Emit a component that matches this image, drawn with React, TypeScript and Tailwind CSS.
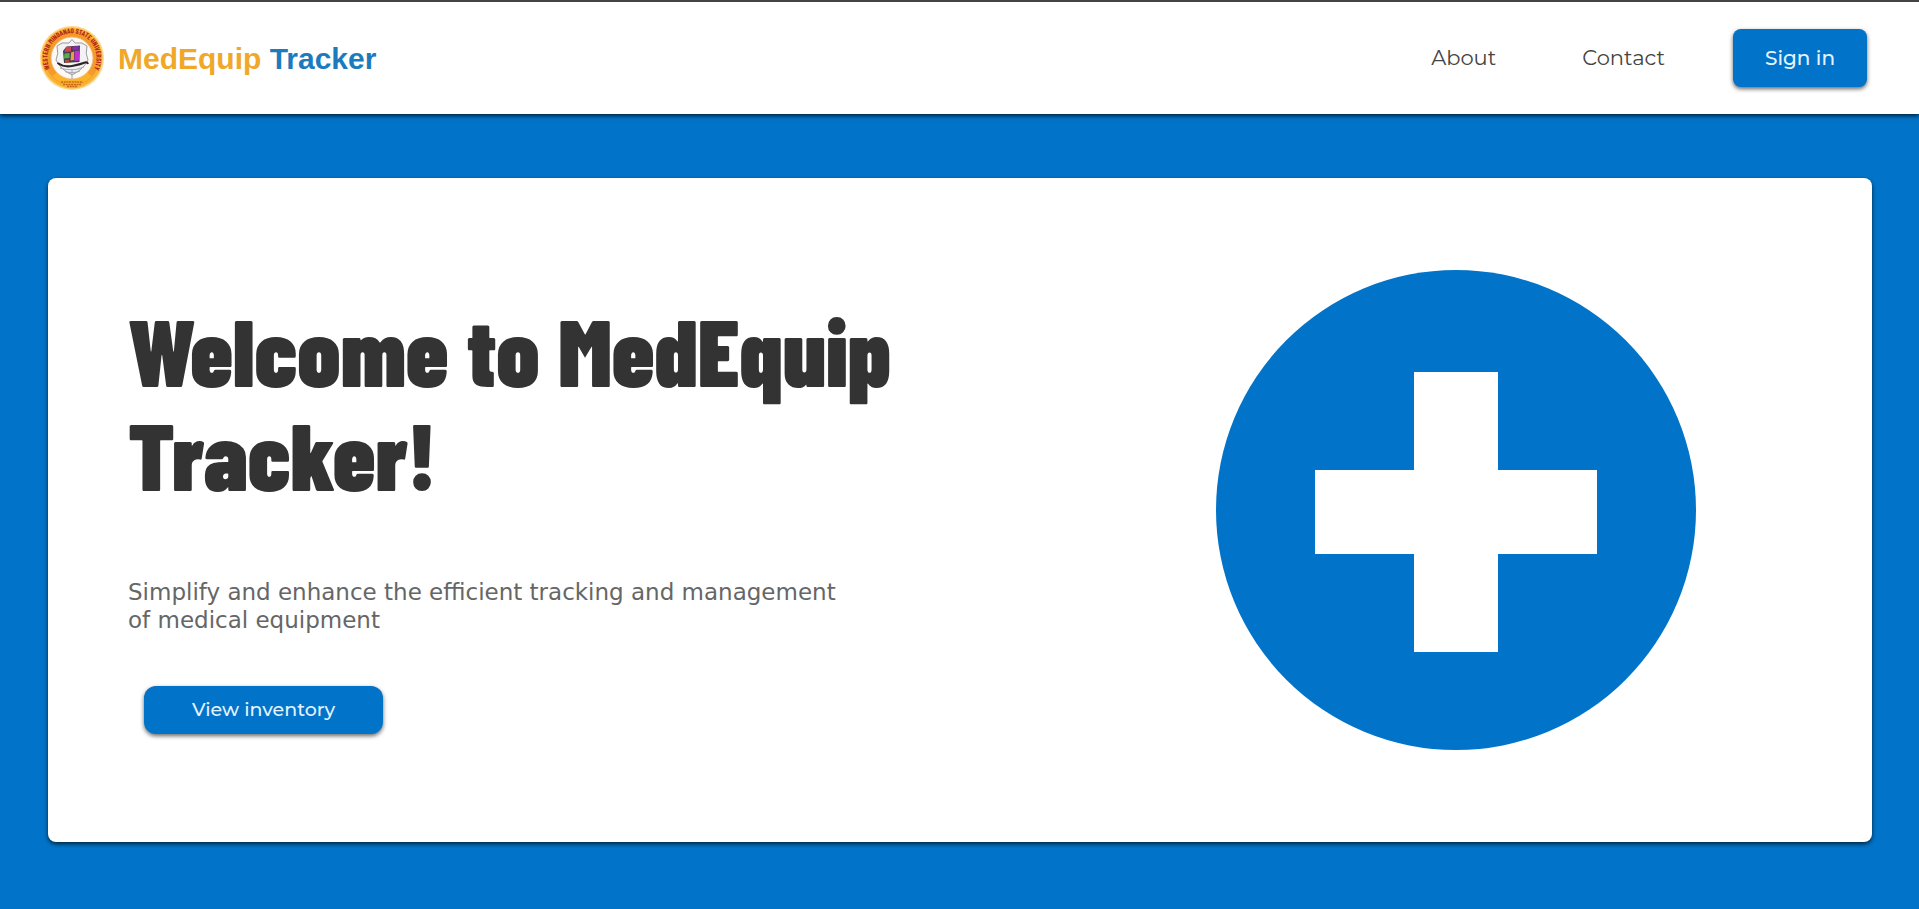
function Seal() {
  return (
    <svg viewBox="0 0 64 64" className="size-16 shrink-0" role="img" aria-label="University seal">
      <defs>
        <path id="seal-arc" d="M 15 49.5 A 24.5 24.5 0 1 1 49 49.5" />
      </defs>
      <circle cx="32" cy="32" r="32" fill="#fbd98c" />
      <circle cx="32" cy="32" r="30.5" fill="#f9b233" />
      <circle cx="32" cy="32" r="27.5" fill="#f59a2a" />
      <path d="M12 50 A 27 27 0 0 0 52 50 L46 46 A 20 20 0 0 1 18 46 Z" fill="#fbb429" />
      <circle cx="32" cy="32" r="21" fill="#fdfaf5" stroke="#f3b77a" strokeWidth="0.8" />
      <text fontFamily="Barlow Condensed, Roboto Condensed, sans-serif" fontSize="7" fontWeight="700" fill="#b3271a">
        <textPath href="#seal-arc" startOffset="50%" textAnchor="middle">
          WESTERN MINDANAO STATE UNIVERSITY
        </textPath>
      </text>
      <path d="M21 56 h22 M23 58.5 h18 M27 60.5 h10" stroke="#c96a1c" strokeWidth="1.4" strokeDasharray="2 0.7" />
      <path
        d="M32 13.5 L35 17 H42 L47 20 Q45 28 48 34 Q44 43 32 49 Q20 43 16 34 Q19 28 17 20 L22 17 H29 Z"
        fill="#f3f3f5"
        stroke="#8b9099"
        strokeWidth="0.9"
      />
      <path d="M23 25 L26.5 20.5 L40 19.5 L39.5 36 L24 37 Z" fill="#493d4c" />
      <path d="M26 21 L31 20.5 V25.5 L24.5 26 Z" fill="#cf4554" />
      <path d="M32.5 20.5 L38.5 20 V23.5 L32.5 24.5 Z" fill="#7d2fae" />
      <path d="M24.5 27.5 L29.5 27 V32 L24 32.5 Z" fill="#55b04d" />
      <path d="M31 26.5 L34 25.5 V34 L30.5 34.5 Z" fill="#e6a13c" />
      <path d="M34.5 25 L39 24.5 V34.5 L34.5 35 Z" fill="#c02fd0" />
      <path d="M25 34 L29 33.5 V36.5 L25 37 Z" fill="#b34b3c" />
      <path d="M17.5 37 Q24 41.5 32 40 T45 36.5 Q47 35.5 48 38" fill="none" stroke="#2d2526" strokeWidth="2" />
      <path d="M20 42 Q32 46 44 41 M25 45.5 Q32 48 40 45 M32 43 V53" fill="none" stroke="#a9adb5" strokeWidth="1.1" />
    </svg>
  );
}

function MedicalCross() {
  return (
    <svg viewBox="0 0 480 480" className="w-full max-w-[480px]" role="img" aria-label="Medical cross">
      <circle cx="240" cy="240" r="240" fill="#0174c9" />
      <path d="M198 102 H282 V200 H381 V284 H282 V382 H198 V284 H99 V200 H198 Z" fill="#fff" />
    </svg>
  );
}

export default function App() {
  return (
    <div className="flex min-h-screen flex-col bg-[#0174c9] font-[Montserrat,'Noto_Sans',sans-serif]">
      <header className="z-10 flex items-center justify-between border-t-2 border-[#444] bg-white py-6 pr-13 pl-10 shadow-[0_2px_4px_rgba(0,0,0,0.7)]">
        <a href="#" className="flex items-center gap-3.5">
          <Seal />
          <span className="font-['Liberation_Sans',Arial,sans-serif] text-[30px] font-bold text-[#f0a828]">
            MedEquip <span className="text-[#1c7bbd]">Tracker</span>
          </span>
        </a>
        <nav className="flex items-center text-[21px] text-[#444]">
          <a href="#about" className="mr-[86px]">About</a>
          <a href="#contact" className="mr-17">Contact</a>
          <button type="button" className="rounded-lg bg-[#0174c9] px-8 py-3.5 text-[20px] leading-[30px] font-medium text-[#e4f3ff] shadow-[0_2px_4px_rgba(0,0,0,0.6)]">
            Sign in
          </button>
        </nav>
      </header>

      <main className="pt-16 pr-[47px] pb-16 pl-12">
        <section className="grid min-h-[664px] grid-cols-2 items-center gap-20 rounded-lg bg-white pl-20 shadow-[0_2px_4px_rgba(0,0,0,0.7)]">
          <div className="pt-3">
            <h1 className="font-['Barlow_Condensed','Roboto_Condensed',sans-serif] text-[94px] leading-[104px] font-black text-[#333]">
              Welcome to MedEquip Tracker!
            </h1>
            <p className="mt-18 max-w-[720px] font-['DejaVu_Sans',sans-serif] text-[23px] leading-7 text-[#666]">
              Simplify and enhance the efficient tracking and management of medical equipment
            </p>
            <button type="button" className="mt-13 ml-4 rounded-xl bg-[#0174c9] px-12 py-2.5 text-[19px] leading-7 font-medium text-[#e4f3ff] shadow-[0_2px_4px_rgba(0,0,0,0.6)]">
              View inventory
            </button>
          </div>
          <div className="flex justify-center">
            <MedicalCross />
          </div>
        </section>
      </main>
    </div>
  );
}
